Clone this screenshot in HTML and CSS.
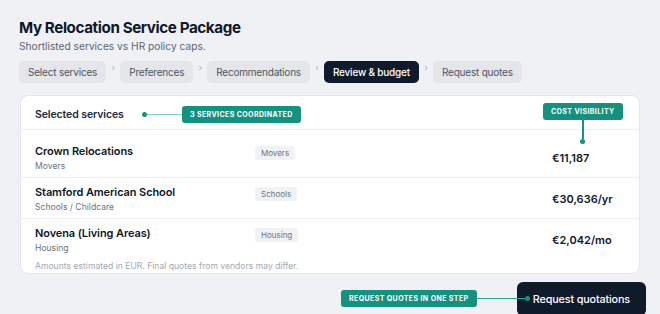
FILE: index.html
```html
<!DOCTYPE html>
<html lang="en">
<head>
    <meta charset="UTF-8">
    <meta name="viewport" content="width=device-width, initial-scale=1.0">
    <title>My Relocation Service Package</title>
    <link rel="stylesheet" href="styles.css">
</head>
<body>
    <div class="page">
        <h1>My Relocation Service Package</h1>
        <p class="subtitle">Shortlisted services vs HR policy caps.</p>

        <div class="steps">
            <span class="step">Select services</span>
            <span class="chev">›</span>
            <span class="step">Preferences</span>
            <span class="chev">›</span>
            <span class="step">Recommendations</span>
            <span class="chev">›</span>
            <span class="step active">Review &amp; budget</span>
            <span class="chev">›</span>
            <span class="step">Request quotes</span>
        </div>

        <div class="card">
            <div class="card-head">
                <span class="card-title">Selected services</span>
                <div class="callout callout-head">
                    <span class="dot"></span>
                    <span class="line line-soft"></span>
                    <span class="badge">3 services coordinated</span>
                </div>
            </div>

            <div class="callout-cost">
                <span class="badge">Cost visibility</span>
                <span class="vline"></span>
                <span class="dot"></span>
            </div>

            <div class="rows">
                <div class="row">
                    <div>
                        <div class="name">Crown Relocations</div>
                        <div class="sub">Movers</div>
                    </div>
                    <span class="chip">Movers</span>
                    <div class="price">€11,187</div>
                </div>
                <div class="row">
                    <div>
                        <div class="name">Stamford American School</div>
                        <div class="sub">Schools / Childcare</div>
                    </div>
                    <span class="chip">Schools</span>
                    <div class="price">€30,636/yr</div>
                </div>
                <div class="row">
                    <div>
                        <div class="name">Novena (Living Areas)</div>
                        <div class="sub">Housing</div>
                    </div>
                    <span class="chip">Housing</span>
                    <div class="price">€2,042/mo</div>
                </div>
            </div>
            <p class="note">Amounts estimated in EUR. Final quotes from vendors may differ.</p>
        </div>

        <div class="footer">
            <div class="callout callout-foot">
                <span class="badge">Request quotes in one step</span>
                <span class="line"></span>
                <span class="dot"></span>
            </div>
            <button class="primary">Request quotations</button>
        </div>
    </div>
</body>
</html>
```

FILE: styles.css
```css
body {
    margin: 0;
    background: #eff1f5;
    font-family: Inter, "Noto Sans", sans-serif;
    color: #111827;
    overflow: hidden;
}
.page {
    padding: 18px 20px 0 19px;
    position: relative;
}
h1 {
    margin: 0;
    font-size: 15.2px;
    line-height: 20px;
    font-weight: 700;
    letter-spacing: -0.4px;
    color: #0f172a;
}
.subtitle {
    margin: 1px 0 0;
    font-size: 10.2px;
    line-height: 15px;
    color: #5b6472;
}
.steps {
    display: flex;
    align-items: flex-start;
    gap: 4px;
    margin-top: 7px;
}
.step {
    height: 22px;
    line-height: 22px;
    padding: 0 9px;
    border-radius: 5px;
    background: #e4e6ea;
    color: #4b5563;
    font-size: 10px;
    letter-spacing: -0.2px;
}
.step.active {
    background: #0f1a2a;
    color: #fff;
    font-weight: 500;
}
.chev {
    font-size: 9px;
    color: #aab0b8;
    line-height: 14px;
    width: 6px;
    text-align: center;
}
.card {
    position: relative;
    margin-top: 12px;
    margin-left: 1px;
    background: #fff;
    border: 1px solid #e3e6eb;
    border-radius: 8px;
}
.card-head {
    position: relative;
    display: flex;
    align-items: center;
    height: 29px;
    padding: 4px 15px 0 14px;
    border-bottom: 1px solid #eef0f3;
}
.card-title {
    font-size: 10.5px;
    font-weight: 600;
    letter-spacing: -0.1px;
    color: #1f2937;
}
.callout {
    position: absolute;
    display: flex;
    align-items: center;
}
.callout-head {
    left: 121px;
    top: 10px;
}
.dot {
    width: 5px;
    height: 5px;
    border-radius: 50%;
    background: #14917f;
    flex: none;
}
.line {
    height: 1.5px;
    background: #2aa291;
}
.line-soft {
    width: 35px;
    background: #86cfc4;
}
.badge {
    display: inline-block;
    height: 17px;
    line-height: 17px;
    padding: 0 8px;
    border-radius: 3px;
    background: #14917f;
    color: #fff;
    font-size: 7px;
    font-weight: 700;
    letter-spacing: 0.4px;
    text-transform: uppercase;
    white-space: nowrap;
}
.callout-cost {
    position: absolute;
    left: 522px;
    top: 7px;
    display: flex;
    flex-direction: column;
    align-items: center;
}
.vline {
    width: 1.5px;
    height: 19px;
    background: #14917f;
}
.rows {
    padding-top: 7px;
}
.row {
    display: grid;
    grid-template-columns: 220px 1fr 72px;
    align-items: center;
    padding: 6px 15px 4px 14px;
    border-bottom: 1px solid #eef0f3;
}
.row:last-child {
    border-bottom: none;
}
.name {
    font-size: 11px;
    line-height: 16px;
    font-weight: 600;
    letter-spacing: -0.1px;
    color: #111827;
}
.sub {
    font-size: 8.6px;
    line-height: 14px;
    color: #6b7280;
}
.chip {
    justify-self: start;
    align-self: start;
    margin-top: 3px;
    height: 14px;
    line-height: 14px;
    padding: 0 6px;
    border-radius: 3px;
    background: #f1f2f5;
    color: #6b7280;
    font-size: 8px;
}
.price {
    font-size: 11px;
    font-weight: 600;
    color: #111827;
}
.note {
    margin: 0;
    padding: 0 15px 0 14px;
    font-size: 8.6px;
    line-height: 14px;
    color: #a3a9b3;
}
.footer {
    position: relative;
    display: flex;
    justify-content: flex-end;
    margin-top: 8px;
    margin-right: -6px;
}
.callout-foot {
    left: 322px;
    top: 8px;
    z-index: 1;
}
.callout-foot .line {
    width: 48px;
}
.primary {
    height: 34px;
    padding: 0 16px;
    border: none;
    border-radius: 6px;
    background: #0f1a2a;
    color: #fff;
    font-family: inherit;
    font-size: 10.8px;
    font-weight: 500;
    letter-spacing: -0.15px;
    cursor: pointer;
}
```
